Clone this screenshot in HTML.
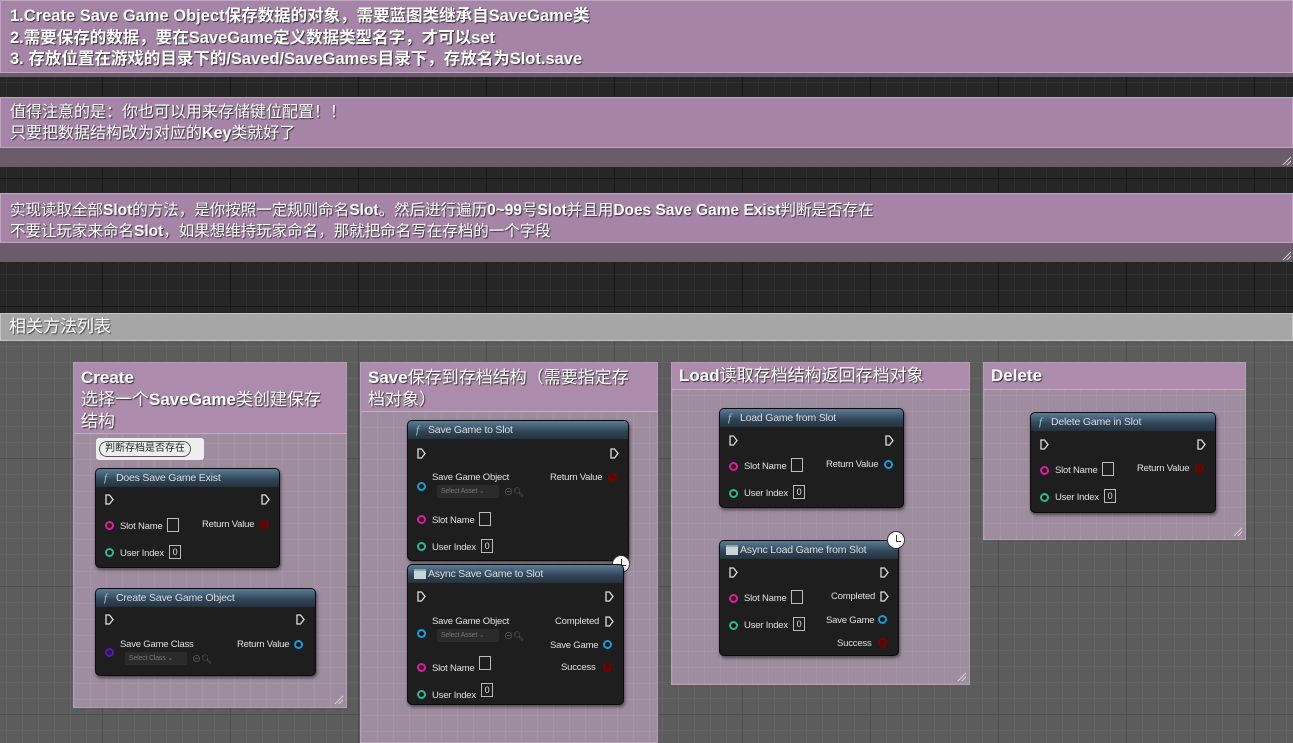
<!DOCTYPE html>
<html><head><meta charset="utf-8"><style>
*{margin:0;padding:0;box-sizing:border-box}
html{overflow:hidden}
body{width:1293px;height:743px;overflow:hidden;position:relative;font-family:"Liberation Sans","Noto Sans CJK SC",sans-serif;
background-color:#262626;
background-image:linear-gradient(#1a1a1a 1px,transparent 1px),linear-gradient(90deg,#1a1a1a 1px,transparent 1px),linear-gradient(#303030 1px,transparent 1px),linear-gradient(90deg,#303030 1px,transparent 1px);
background-size:128px 128px,128px 128px,16px 16px,16px 16px;background-position:-26px -78px}
.a{position:absolute}
.cm{position:absolute;background:#6b5c6b}
.ch{position:absolute;left:0;right:0;top:0;background:#a684a8;color:#fff;text-shadow:1px 1px 1px #333;border:1px solid #c0a5c0}
.lower{position:absolute;left:0;top:340px;width:1293px;height:403px;background-color:#5c5c5c;
background-image:linear-gradient(#505050 1px,transparent 1px),linear-gradient(90deg,#505050 1px,transparent 1px),linear-gradient(#646464 1px,transparent 1px),linear-gradient(90deg,#646464 1px,transparent 1px);
background-size:128px 128px,128px 128px,16px 16px,16px 16px;background-position:-26px -10px}
.box{position:absolute;background-color:#9e8c9f;border:1px solid #b39fb3;
background-image:linear-gradient(#a594a6 1px,transparent 1px),linear-gradient(90deg,#a594a6 1px,transparent 1px);background-size:16px 16px}
.bh{position:absolute;left:0;right:0;top:0;background:#ac8bad;color:#fff;font-size:17px;line-height:22px;padding:4px 7px;text-shadow:1px 1px 1px #333;border-bottom:1px solid #c4adc4;white-space:nowrap}
.node{position:absolute;background:#1e1e1f;border:1px solid #0a0a0a;border-radius:5px;box-shadow:1px 2px 3px rgba(0,0,0,.5);color:#e0e0e0;font-size:9.5px;letter-spacing:-0.2px}
.nh{position:absolute;left:0;right:0;top:0;height:18px;border-radius:4px 4px 0 0;background:linear-gradient(180deg,#5b7c97,#2e4456 60%,#26323c);color:#ddd;font-size:10.5px;line-height:18px;padding-left:20px}
.fi{position:absolute;left:8px;top:0;font-style:italic;font-family:"Liberation Serif",serif;color:#9cc;font-size:11px}
.ai{position:absolute;left:6px;top:4px;width:12px;height:10px;background:#cbd3da;border-top:2px solid #8aa}
.ex{position:absolute;width:9px;height:11px}
.pin{position:absolute;width:9px;height:9px;border-radius:50%;border:2px solid}
.t{position:absolute;white-space:nowrap}
.in{position:absolute;width:12px;height:14px;border:1px solid #bbb}
.sel{position:absolute;width:62px;height:13px;background:#2b2b2b;border-radius:2px;color:#777;font-size:7px;line-height:13px;padding-left:4px}
.clock{position:absolute;width:18px;height:18px;border-radius:50%;background:#fff;border:1px solid #333}
.clock:after{content:"";position:absolute;left:8px;top:3px;width:4px;height:6px;border-left:1.5px solid #333;border-bottom:1.5px solid #333}
.rs{position:absolute;width:10px;height:10px;background:linear-gradient(135deg,transparent 55%,#ddd 56%,#ddd 62%,transparent 63%,transparent 75%,#ddd 76%,#ddd 82%,transparent 83%)}
</style></head><body>

<div class="cm" style="left:0;top:0;width:1293px;height:77px"><div class="ch" style="height:73px;font-size:16.5px;font-weight:bold;line-height:21.5px;padding:5px 9px">1.Create Save Game Object保存数据的对象，需要蓝图类继承自SaveGame类<br>2.需要保存的数据，要在SaveGame定义数据类型名字，才可以set<br>3. 存放位置在游戏的目录下的/Saved/SaveGames目录下，存放名为Slot.save</div></div>

<div class="cm" style="left:0;top:97px;width:1293px;height:70px"><div class="ch" style="height:51px;font-size:16px;line-height:21px;padding:4px 9px">值得注意的是：你也可以用来存储键位配置！！<br>只要把数据结构改为对应的<b>Key</b>类就好了</div><div class="rs" style="right:2px;bottom:2px"></div></div>

<div class="cm" style="left:0;top:193px;width:1293px;height:69px"><div class="ch" style="height:50px;font-size:15.5px;line-height:21px;padding:6px 9px">实现读取全部<b>Slot</b>的方法，是你按照一定规则命名<b>Slot</b>。然后进行遍历<b>0~99</b>号<b>Slot</b>并且用<b>Does Save Game Exist</b>判断是否存在<br>不要让玩家来命名<b>Slot</b>，如果想维持玩家命名，那就把命名写在存档的一个字段</div><div class="rs" style="right:2px;bottom:2px"></div></div>

<div class="lower"></div>
<div class="a" style="left:0;top:313px;width:1293px;height:28px;background:#a6a6a6;border:1px solid #c4c4c4;color:#fff;font-size:17px;line-height:26px;padding-left:8px;text-shadow:1px 1px 1px #444">相关方法列表</div>

<div class="box" style="left:73px;top:362px;width:274px;height:346px"><div class="bh" style="height:71px"><b>Create</b><br>选择一个<b>SaveGame</b>类创建保存<br>结构</div><div class="rs" style="right:3px;bottom:3px"></div></div>
<div class="box" style="left:360px;top:362px;width:298px;height:381px"><div class="bh" style="height:49px"><b>Save</b>保存到存档结构（需要指定存<br>档对象）</div></div>
<div class="box" style="left:671px;top:362px;width:299px;height:323px"><div class="bh" style="height:27px;padding-top:2px"><b>Load</b>读取存档结构返回存档对象</div><div class="rs" style="right:3px;bottom:3px"></div></div>
<div class="box" style="left:983px;top:362px;width:263px;height:178px"><div class="bh" style="height:27px;padding-top:2px"><b>Delete</b></div><div class="rs" style="right:3px;bottom:3px"></div></div>

<div class="a" style="left:96px;top:438px;width:108px;height:22px;background:#eee;border-radius:3px"><div class="a" style="left:3px;top:3px;width:92px;height:16px;border:1px solid #555;border-radius:8px;font-size:10px;line-height:14px;text-align:center;color:#222">判断存档是否存在</div></div>

<svg width="0" height="0" style="position:absolute"><defs><symbol id="ex" viewBox="0 0 9 11"><path d="M1 1H4.5L8 5.5 4.5 10H1Z" fill="none" stroke="#ddd" stroke-width="1.3"/></symbol></defs></svg>

<div class="node" style="left:95px;top:468px;width:185px;height:100px"><div class="nh"><span class="fi">f</span>Does Save Game Exist</div>
<svg class="ex" style="left:9px;top:25px"><use href="#ex"/></svg><svg class="ex" style="left:165px;top:25px"><use href="#ex"/></svg>
<div class="pin" style="left:9px;top:52px;border-color:#d020b0;background:#400"></div><div class="t" style="left:24px;top:52px">Slot Name</div><div class="in" style="left:71px;top:49px"></div>
<div class="t" style="left:106px;top:50px">Return Value</div><div class="pin" style="left:164px;top:51px;border-color:#700;background:#500"></div>
<div class="pin" style="left:9px;top:79px;border-color:#20c090;background:#111"></div><div class="t" style="left:24px;top:79px">User Index</div><div class="in" style="left:73px;top:76px;font-size:9px;text-align:center;line-height:12px">0</div></div>

<div class="node" style="left:95px;top:588px;width:221px;height:88px"><div class="nh"><span class="fi">f</span>Create Save Game Object</div>
<svg class="ex" style="left:9px;top:25px"><use href="#ex"/></svg><svg class="ex" style="left:200px;top:25px"><use href="#ex"/></svg>
<div class="pin" style="left:9px;top:59px;border-color:#5020a0;background:#301060"></div><div class="t" style="left:24px;top:50px">Save Game Class</div><div class="sel" style="left:29px;top:63px">Select Class ⌄</div><div class="t" style="left:96px;top:63px;color:#666;font-size:9px">⊖🔍︎</div>
<div class="t" style="left:141px;top:50px">Return Value</div><div class="pin" style="left:198px;top:51px;border-color:#10a0e0;background:#111"></div></div>

<div class="node" style="left:407px;top:420px;width:222px;height:141px"><div class="nh"><span class="fi">f</span>Save Game to Slot</div>
<svg class="ex" style="left:9px;top:27px"><use href="#ex"/></svg><svg class="ex" style="left:202px;top:27px"><use href="#ex"/></svg>
<div class="pin" style="left:9px;top:61px;border-color:#10a0e0;background:#111"></div><div class="t" style="left:24px;top:51px">Save Game Object</div><div class="sel" style="left:29px;top:64px">Select Asset ⌄</div><div class="t" style="left:96px;top:64px;color:#666;font-size:9px">⊖🔍︎</div>
<div class="t" style="left:142px;top:51px">Return Value</div><div class="pin" style="left:200px;top:52px;border-color:#700;background:#500"></div>
<div class="pin" style="left:9px;top:94px;border-color:#d020b0;background:#400"></div><div class="t" style="left:24px;top:94px">Slot Name</div><div class="in" style="left:71px;top:91px"></div>
<div class="pin" style="left:9px;top:121px;border-color:#20c090;background:#111"></div><div class="t" style="left:24px;top:121px">User Index</div><div class="in" style="left:73px;top:118px;font-size:9px;text-align:center;line-height:12px">0</div></div>
<div class="clock" style="left:612px;top:555px"></div>

<div class="node" style="left:407px;top:564px;width:217px;height:141px"><div class="nh"><span class="ai"></span>Async Save Game to Slot</div>
<svg class="ex" style="left:9px;top:26px"><use href="#ex"/></svg><svg class="ex" style="left:197px;top:26px"><use href="#ex"/></svg>
<div class="pin" style="left:9px;top:64px;border-color:#10a0e0;background:#111"></div><div class="t" style="left:24px;top:51px">Save Game Object</div><div class="sel" style="left:29px;top:64px">Select Asset ⌄</div><div class="t" style="left:96px;top:64px;color:#666;font-size:9px">⊖🔍︎</div>
<div class="t" style="left:147px;top:51px">Completed</div><svg class="ex" style="left:197px;top:51px"><use href="#ex"/></svg>
<div class="t" style="left:142px;top:75px">Save Game</div><div class="pin" style="left:195px;top:75px;border-color:#10a0e0;background:#111"></div>
<div class="t" style="left:153px;top:97px">Success</div><div class="pin" style="left:195px;top:98px;border-color:#700;background:#500"></div>
<div class="pin" style="left:9px;top:98px;border-color:#d020b0;background:#400"></div><div class="t" style="left:24px;top:98px">Slot Name</div><div class="in" style="left:71px;top:91px"></div>
<div class="pin" style="left:9px;top:125px;border-color:#20c090;background:#111"></div><div class="t" style="left:24px;top:125px">User Index</div><div class="in" style="left:73px;top:118px;font-size:9px;text-align:center;line-height:12px">0</div></div>

<div class="node" style="left:719px;top:408px;width:185px;height:100px"><div class="nh"><span class="fi">f</span>Load Game from Slot</div>
<svg class="ex" style="left:9px;top:26px"><use href="#ex"/></svg><svg class="ex" style="left:165px;top:26px"><use href="#ex"/></svg>
<div class="pin" style="left:9px;top:53px;border-color:#d020b0;background:#400"></div><div class="t" style="left:24px;top:52px">Slot Name</div><div class="in" style="left:71px;top:49px"></div>
<div class="t" style="left:106px;top:50px">Return Value</div><div class="pin" style="left:164px;top:51px;border-color:#10a0e0;background:#111"></div>
<div class="pin" style="left:9px;top:80px;border-color:#20c090;background:#111"></div><div class="t" style="left:24px;top:79px">User Index</div><div class="in" style="left:73px;top:76px;font-size:9px;text-align:center;line-height:12px">0</div></div>

<div class="node" style="left:719px;top:540px;width:180px;height:116px"><div class="nh"><span class="ai"></span>Async Load Game from Slot</div>
<svg class="ex" style="left:9px;top:26px"><use href="#ex"/></svg><svg class="ex" style="left:160px;top:26px"><use href="#ex"/></svg>
<div class="pin" style="left:9px;top:53px;border-color:#d020b0;background:#400"></div><div class="t" style="left:24px;top:52px">Slot Name</div><div class="in" style="left:71px;top:49px"></div>
<div class="pin" style="left:9px;top:80px;border-color:#20c090;background:#111"></div><div class="t" style="left:24px;top:79px">User Index</div><div class="in" style="left:73px;top:76px;font-size:9px;text-align:center;line-height:12px">0</div>
<div class="t" style="left:111px;top:50px">Completed</div><svg class="ex" style="left:160px;top:50px"><use href="#ex"/></svg>
<div class="t" style="left:106px;top:74px">Save Game</div><div class="pin" style="left:158px;top:74px;border-color:#10a0e0;background:#111"></div>
<div class="t" style="left:117px;top:97px">Success</div><div class="pin" style="left:158px;top:97px;border-color:#700;background:#500"></div></div>
<div class="clock" style="left:887px;top:531px"></div>

<div class="node" style="left:1030px;top:412px;width:186px;height:101px"><div class="nh"><span class="fi">f</span>Delete Game in Slot</div>
<svg class="ex" style="left:9px;top:26px"><use href="#ex"/></svg><svg class="ex" style="left:166px;top:26px"><use href="#ex"/></svg>
<div class="pin" style="left:9px;top:53px;border-color:#d020b0;background:#400"></div><div class="t" style="left:24px;top:52px">Slot Name</div><div class="in" style="left:71px;top:49px"></div>
<div class="t" style="left:106px;top:50px">Return Value</div><div class="pin" style="left:164px;top:51px;border-color:#700;background:#500"></div>
<div class="pin" style="left:9px;top:80px;border-color:#20c090;background:#111"></div><div class="t" style="left:24px;top:79px">User Index</div><div class="in" style="left:73px;top:76px;font-size:9px;text-align:center;line-height:12px">0</div></div>

</body></html>
